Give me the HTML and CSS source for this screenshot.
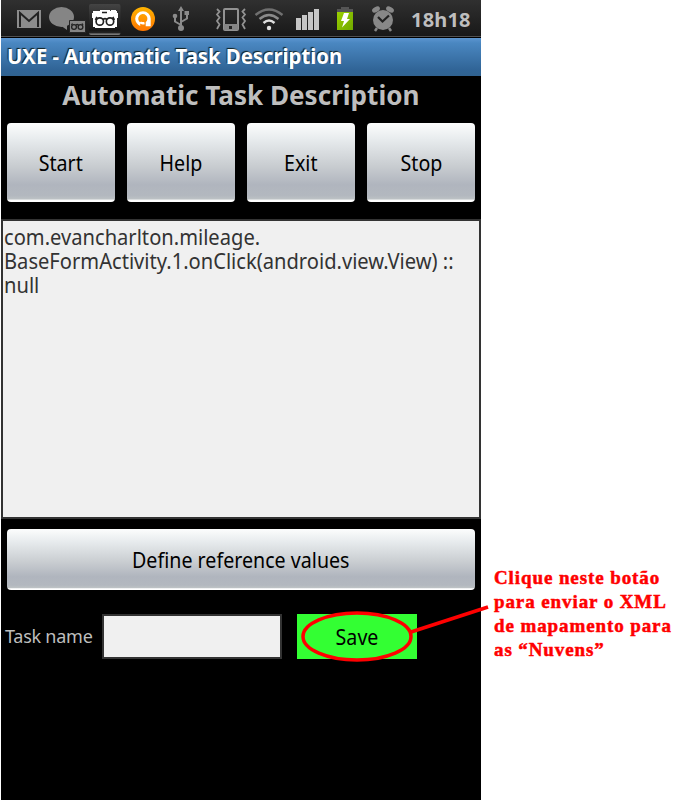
FILE: index.html
```html
<!DOCTYPE html>
<html lang="en">
<head>
<meta charset="utf-8">
<title>UXE - Automatic Task Description</title>
<link rel="stylesheet" href="styles.css">
</head>
<body>
<main class="page">
  <section class="phone">
    <header class="status">
      <svg class="icons" width="480" height="38" viewBox="1 0 480 38" aria-hidden="true">
        <defs>
          <linearGradient id="tile" x2="0" y2="1"><stop stop-color="#444"/><stop offset=".85" stop-color="#171717"/><stop offset=".92" stop-color="#222"/><stop offset=".97" stop-color="#777"/></linearGradient>
          <linearGradient id="orange" x2="0" y2="1"><stop stop-color="#ffb400"/><stop offset="1" stop-color="#ff7600"/></linearGradient>
          <linearGradient id="green" x2="1" y2="1"><stop stop-color="#9bd000"/><stop offset="1" stop-color="#6fa800"/></linearGradient>
        </defs>
        <path fill="#8c8c8c" d="M17 10h24v18H17z"/>
        <path d="M20 27V13L29 21l9-8v14" fill="none" stroke="#222" stroke-width="2"/>
        <g fill="#858585">
          <ellipse cx="61.500" cy="17" rx="12.500" ry="10"/>
          <path d="M60 25l7 5v-7z"/>
          <path d="M69.500 20.500h16v12h-16z" stroke="#252525" stroke-width="1"/>
        </g>
        <g fill="none" stroke="#222" stroke-width="1.300"><circle cx="74" cy="27" r="2.400"/><circle cx="80.500" cy="27" r="2.400"/><path d="M76 25q1.300-1 2.600 0M71.500 25l1-1.500M83 25l-1-1.500"/></g>
        <rect x="89" y="4" width="31.500" height="31" rx="2" fill="url(#tile)"/>
        <path fill="#fff" d="M93 11h7v-1h10v1h1v-1h5v1h1v2h1v5h-1v9h-2v1H95v-1h-2v-9h-1v-5h1z"/>
        <g fill="none" stroke="#222" stroke-width="1.700"><circle cx="99.800" cy="21.500" r="3.700"/><circle cx="110" cy="21.500" r="3.700"/><path d="M103 19.500q2-1.700 4 0M95.500 20l1.500-3M114.300 20l-1.500-3M102 12.500h5"/></g>
        <circle cx="143" cy="19" r="12" fill="url(#orange)"/>
        <path fill="#fff" fill-rule="evenodd" d="M143 11.200a7.800 7.600 0 0 0-7.800 7.600c0 3.200 2 5.900 5 7.100v-3.500a4.600 4.600 0 1 1 5.500-.2v4h5v-7.400a7.700 7.600 0 0 0-7.700-7.600z"/>
        <path d="M140.200 22.300q1.300 1.400 4.300.8" fill="none" stroke="#fff" stroke-width="2.400"/>
        <g fill="none" stroke="#8b8b8b" stroke-width="2"><path d="M181 27V9M181 25l-6-3.500V16M181 22l6-3.500V13"/></g>
        <g fill="#8b8b8b"><circle cx="181" cy="28" r="3"/><path d="M178 11l3-5 3 5zM184.500 11h4.500v4h-4.500z"/><circle cx="175" cy="16" r="2.300"/></g>
        <g fill="none" stroke="#929292" stroke-width="2"><rect x="224" y="9" width="14" height="21" rx="1"/><path d="M217 9l2.500 2.500-2.500 3 2.500 3-2.500 3.500 2.500 3.500-2.500 4.500M245 9l-2.500 2.500 2.500 3-2.500 3 2.500 3.500-2.500 3.500 2.500 4.500" stroke-width="1.800"/></g>
        <path fill="#858585" d="M224 24h14v6h-14z"/><path fill="#222" d="M229 26h3v3h-3z"/>
        <g fill="none" stroke-width="2.400"><path d="M255.500 15q13.500-11 27 0" stroke="#707070"/><path d="M259.500 19q9.500-8 19 0" stroke="#8a8a8a"/><path d="M263.500 23q5.500-5 11 0" stroke="#ddd"/></g>
        <circle cx="269" cy="28" r="2.200" fill="#e2e2e2"/>
        <g fill="#c6c6c6"><path d="M296 18h5v12h-5zM302 15h5v15h-5zM308 12h5v18h-5zM314 9h5v21h-5z"/></g>
        <path fill="#555" d="M341 7h8v2h4v3h-16V9h4z"/><path fill="url(#green)" d="M337 12h16v18h-16z"/>
        <path fill="#fff" d="M344 13h5l-2 6h3l-8 8.500 2-6.500h-3z"/>
        <g fill="#888"><circle cx="383" cy="20" r="10"/><ellipse cx="376" cy="9.500" rx="4.200" ry="2.500" transform="rotate(-28 376 9.500)"/><ellipse cx="390" cy="9.500" rx="4.200" ry="2.500" transform="rotate(28 390 9.500)"/></g>
        <path d="M377 28l-2 3M389 28l2 3" stroke="#888" stroke-width="2.500"/><path d="M378 17l4.500 4.500L389 15.500" stroke="#222" stroke-width="2.200" fill="none"/>
      </svg>
      <span class="clock">18h18</span>
    </header>
    <div class="titlebar"><span>UXE - Automatic Task Description</span></div>
    <h1 class="heading"><span>Automatic Task Description</span></h1>
    <div class="actions">
      <button class="btn"><span>Start</span></button>
      <button class="btn"><span>Help</span></button>
      <button class="btn"><span>Exit</span></button>
      <button class="btn"><span>Stop</span></button>
    </div>
    <div class="log"><span>com.evancharlton.mileage.<br>BaseFormActivity.1.onClick(android.view.View) ::<br>null</span></div>
    <button class="btn wide"><span>Define reference values</span></button>
    <div class="task">
      <span class="label">Task name</span>
      <div class="field"></div>
      <button class="save"><span>Save</span></button>
    </div>
  </section>
  <aside class="note">Clique neste botão<br>para enviar o XML<br>de mapamento para<br>as “Nuvens”</aside>
  <svg class="callout" width="200" height="60" viewBox="295 605 200 60" aria-hidden="true">
    <g fill="none" stroke="red" stroke-width="3.500"><ellipse cx="357" cy="636.500" rx="54" ry="23.500"/><path d="M411 632L488 607"/></g>
  </svg>
</main>
</body>
</html>
```
FILE: styles.css
```css
* { box-sizing: border-box; }
body { margin: 0; background: #fff; font-family: "Noto Sans", sans-serif; }
.page { position: relative; display: flex; width: 700px; height: 800px; padding-left: 1px; overflow: hidden; }
.phone { width: 480px; height: 800px; background: #000; display: flex; flex-direction: column; }
button { border: 0; padding: 0; margin: 0; font-family: inherit; }
.status { display: flex; flex: none; height: 38px; background: linear-gradient(#303030, #191919 35px, #171717 36px, #505050 36px, #505050 37px, #000 37px); }
.icons { flex: none; }
.clock { margin-left: -70px; line-height: 39px; font-size: 20px; font-weight: 700; color: #bebebe; letter-spacing: .2px; white-space: nowrap; }
.titlebar { flex: none; height: 38px; padding-left: 6px; line-height: 37px; font-size: 21px; font-weight: 700; color: #fff; background: linear-gradient(#5c95d0, #4a87c1 5px, #306496 32px, #306290); text-shadow: -1px -1px 1px #122; white-space: nowrap; }
.titlebar span, .log span { display: inline-block; transform-origin: 0 50%; }
.titlebar span { transform: scaleX(.966); }
.heading { flex: none; margin: 0; height: 47px; line-height: 38px; text-align: center; font-size: 27px; font-weight: 700; color: #bebebe; white-space: nowrap; }
.heading span, .btn span, .save span { display: inline-block; }
.heading span { transform: scaleX(.966); }
.actions { flex: none; display: grid; grid-template-columns: repeat(4, 108px); gap: 12px; padding: 0 6px; }
.btn { height: 79px; border-radius: 4px; font-size: 22px; line-height: 79px; color: #000; background: linear-gradient(#fcfdfd, #e8ecee 20%, #c8ccd0 55%, #b0b5be 78%, #b3b8bf 92%, #bcc1c4 96%, #fff 98%); }
.btn span, .save span { transform: scaleX(.893); }
.log { flex: none; height: 300px; margin-top: 17px; padding: 3px 1px; border: 2px solid #333; background: #f0f0f0; color: #333; font-size: 22px; line-height: 24px; white-space: nowrap; }
.log span { transform: scaleX(.915); }
.wide { flex: none; height: 61px; margin: 10px 6px 0; line-height: 61px; }
.task { display: flex; align-items: center; margin-top: 24px; height: 45px; }
.label { width: 101px; padding-left: 4px; font-size: 18px; line-height: 43px; letter-spacing: -.25px; color: #bebebe; white-space: nowrap; }
.field { width: 180px; height: 45px; border: 2px solid #333; background: #f0f0f0; }
.save { width: 120px; height: 45px; margin-left: 15px; background: #3f3; font-size: 22px; line-height: 45px; color: #000; }
.note { margin: 566px 0 0 13px; font: 700 19px/24px "Liberation Serif", serif; color: red; letter-spacing: .9px; -webkit-text-stroke: .5px red; white-space: nowrap; }
.callout { position: absolute; left: 295px; top: 605px; }
```
